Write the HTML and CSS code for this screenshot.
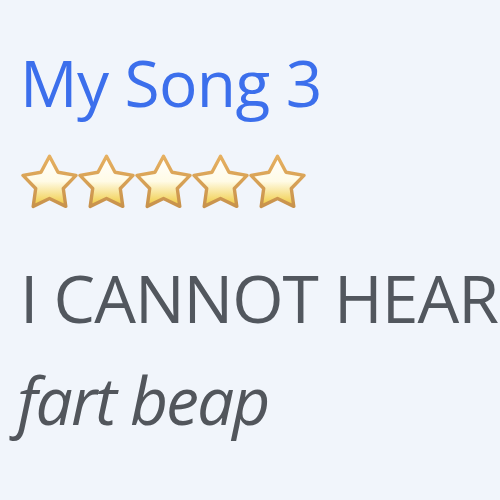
FILE: index.html
```html
<!DOCTYPE html>
<html>
<head>
<meta charset="utf-8">
<link rel="stylesheet" href="styles.css">
</head>
<body>
<div class="card">
  <div class="title">My Song 3</div>
  <div class="stars">
    <svg class="star" viewBox="0 0 57 56"><use href="#s"/></svg>
    <svg class="star" viewBox="0 0 57 56"><use href="#s"/></svg>
    <svg class="star" viewBox="0 0 57 56"><use href="#s"/></svg>
    <svg class="star" viewBox="0 0 57 56"><use href="#s"/></svg>
    <svg class="star" viewBox="0 0 57 56"><use href="#s"/></svg>
  </div>
  <div class="artist">I CANNOT HEAR</div>
  <div class="album">fart beap</div>
</div>
<svg width="0" height="0" class="defs">
  <defs>
    <linearGradient id="g" x1="0" y1="0" x2="0" y2="1">
      <stop offset="0" stop-color="#ffffff"/>
      <stop offset="0.5" stop-color="#fffbe6"/>
      <stop offset="1" stop-color="#efc93a"/>
    </linearGradient>
    <linearGradient id="o" x1="0" y1="0" x2="0" y2="1">
      <stop offset="0" stop-color="#e6b060"/>
      <stop offset="1" stop-color="#c8924c"/>
    </linearGradient>
    <path id="s" d="M28.5 2.2 L37.02 18.27 L55 21.4 L42.29 34.48 L44.8 52.4 L28.5 44.5 L12.2 52.4 L14.71 34.48 L2 21.4 L19.98 18.27 Z" fill="url(#g)" stroke="url(#o)" stroke-width="3.4" stroke-linejoin="round"/>
  </defs>
</svg>
</body>
</html>
```
FILE: styles.css
```css
html, body {
  margin: 0;
  padding: 0;
  background: #f1f5fb;
}
.card {
  padding: 38px 0 0 20px;
  display: flex;
  flex-direction: column;
  font-family: "Open Sans", "Noto Sans", sans-serif;
}
.title {
  color: #3c6fec;
  font-size: 64px;
  line-height: 90px;
  letter-spacing: -0.6px;
}
.stars {
  display: flex;
  margin-top: 26px;
  height: 56px;
  margin-left: 1px;
}
.star {
  width: 57px;
  height: 56px;
}
.artist {
  color: #52575e;
  font-size: 66px;
  line-height: 90px;
  margin-top: 42px;
  letter-spacing: -1px;
}
.album {
  color: #52565c;
  font-size: 66px;
  font-style: italic;
  line-height: 90px;
  margin-top: 12px;
  margin-left: -3px;
  letter-spacing: -2px;
}
.defs {
  position: absolute;
}
```
